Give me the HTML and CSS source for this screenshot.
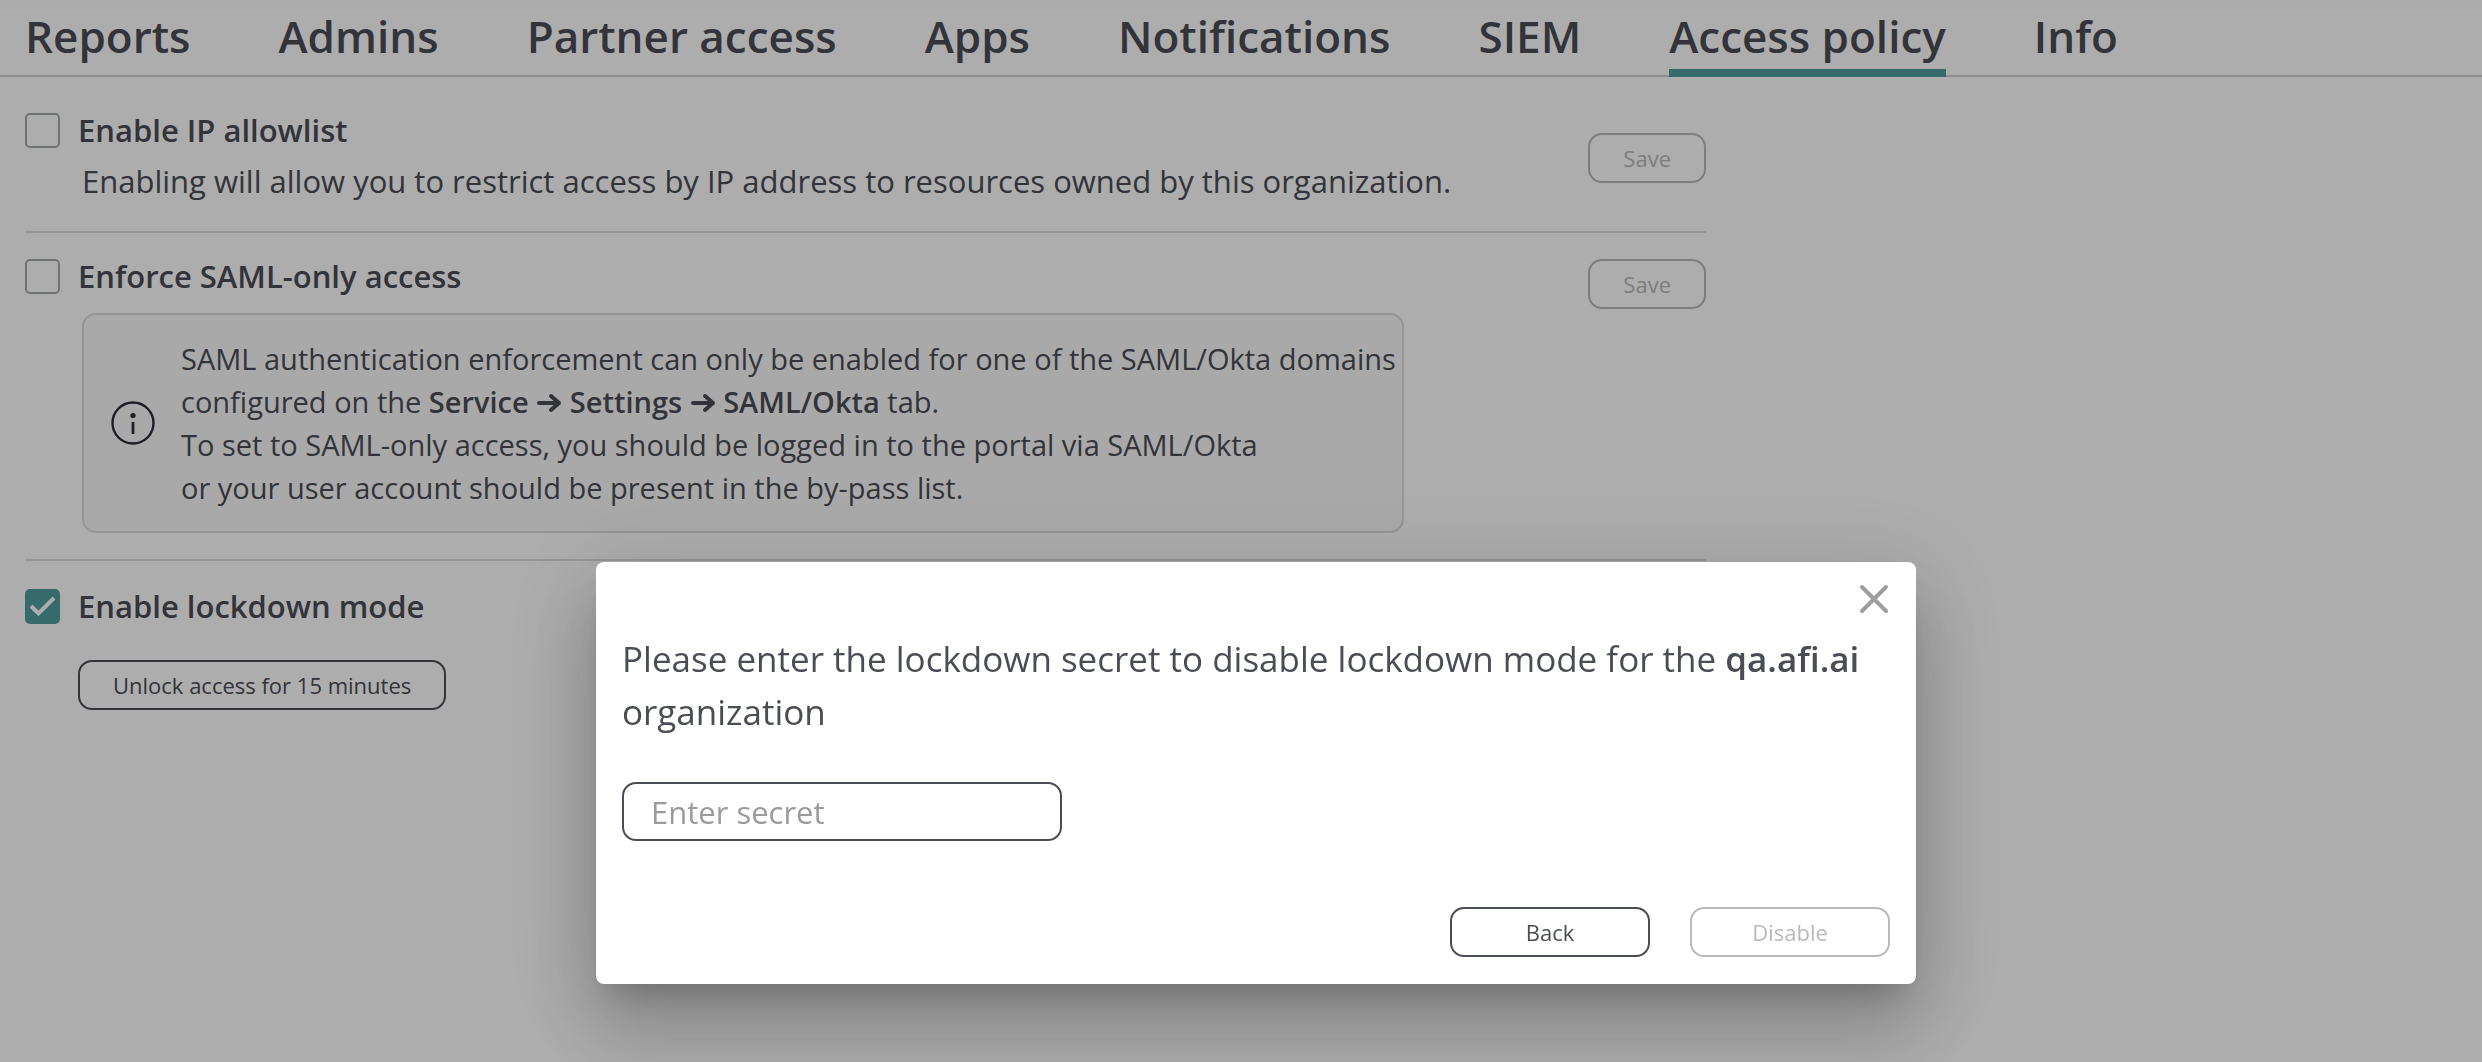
FILE: index.html
```html
<!DOCTYPE html>
<html lang="en">
<head>
  <meta charset="utf-8">
  <title>Access policy</title>
  <link rel="stylesheet" href="styles.css">
</head>
<body>
  <nav class="tabs">
    <a class="tab" href="#reports">Reports</a>
    <a class="tab" href="#admins">Admins</a>
    <a class="tab" href="#partner">Partner access</a>
    <a class="tab" href="#apps">Apps</a>
    <a class="tab" href="#notifications">Notifications</a>
    <a class="tab" href="#siem">SIEM</a>
    <a class="tab tab-active" href="#policy" aria-current="page">Access policy</a>
    <a class="tab" href="#info">Info</a>
  </nav>

  <main class="policies">
    <section class="policy policy-ip">
      <div class="policy-body">
        <label class="check"><input type="checkbox" class="check-box">Enable IP allowlist</label>
        <p class="description">Enabling will allow you to restrict access by IP address to resources owned by this organization.</p>
      </div>
      <button class="button button-save" type="button" disabled>Save</button>
    </section>

    <section class="policy policy-saml">
      <div class="policy-body">
        <label class="check"><input type="checkbox" class="check-box">Enforce SAML-only access</label>
        <div class="notice">
          <svg class="notice-icon" viewBox="0 0 44 44" aria-hidden="true">
            <circle cx="22" cy="22" r="20.5" fill="none" stroke="currentColor" stroke-width="2.4"/>
            <circle cx="22" cy="14.5" r="2.6" fill="currentColor"/>
            <path d="M22 21v12" stroke="currentColor" stroke-width="2.8"/>
          </svg>
          <p class="notice-text">SAML authentication enforcement can only be enabled for one of the SAML/Okta domains<br>configured on the <b>Service <svg class="arrow" viewBox="0 0 26 20" role="img" aria-label="to"><path d="M3 10h20M15 3l8 7-8 7"/></svg> Settings <svg class="arrow" viewBox="0 0 26 20" role="img" aria-label="to"><path d="M3 10h20M15 3l8 7-8 7"/></svg> SAML/Okta</b> tab.<br>To set to SAML-only access, you should be logged in to the portal via SAML/Okta<br>or your user account should be present in the by-pass list.</p>
        </div>
      </div>
      <button class="button button-save" type="button" disabled>Save</button>
    </section>

    <section class="policy policy-lockdown">
      <div class="policy-body">
        <label class="check"><input type="checkbox" class="check-box" checked>Enable lockdown mode</label>
        <button class="button button-unlock" type="button">Unlock access for 15 minutes</button>
      </div>
    </section>
  </main>

  <div class="overlay">
    <form class="dialog" role="dialog" aria-modal="true" aria-labelledby="dialog-message">
      <button class="close" type="button" aria-label="Close">
        <svg class="close-icon" viewBox="0 0 30 30" aria-hidden="true"><path d="M3 3l24 24M27 3L3 27"/></svg>
      </button>
      <label class="message" id="dialog-message" for="secret">Please enter the lockdown secret to disable lockdown mode for the <b>qa.afi.ai</b> organization</label>
      <input class="secret" id="secret" type="text" placeholder="Enter secret">
      <div class="actions">
        <button class="button button-action" type="button">Back</button>
        <button class="button button-action" type="submit" disabled>Disable</button>
      </div>
    </form>
  </div>
</body>
</html>
```
FILE: styles.css
```css
* {
  box-sizing: border-box;
}

body {
  margin: 0;
  background: #fff;
  color: #4b4d54;
  font-family: "Open Sans", "Noto Sans", sans-serif;
  font-size: 31px;
}

p {
  margin: 0;
}

b {
  font-weight: 600;
}

.tabs {
  display: flex;
  gap: 88px;
  height: 77px;
  padding: 0 25px;
  border-bottom: 2px solid #d2d2d2;
  box-shadow: inset 0 10px #fcfcfc;
}

.tab {
  height: 77px;
  border-bottom: 8px solid transparent;
  color: inherit;
  font-size: 44px;
  font-weight: 600;
  line-height: 72px;
  text-decoration: none;
  white-space: nowrap;
}

.tab-active {
  border-bottom-color: #509c9e;
}

.policies {
  max-width: 1706px;
  padding-left: 25px;
}

.policy {
  display: flex;
  align-items: flex-start;
  justify-content: space-between;
  border-bottom: 2px solid #dcdcdc;
}

.policy:last-child {
  border-bottom: 0;
}

.policy-ip {
  align-items: center;
  padding: 32px 0 28px;
}

.policy-saml {
  padding: 22px 0 26px;
}

.policy-lockdown {
  padding: 24px 0;
}

.check {
  display: flex;
  align-items: center;
  gap: 18px;
  font-weight: 600;
  line-height: 42px;
}

.check-box {
  appearance: none;
  width: 35px;
  height: 35px;
  margin: 0;
  border: 2px solid #a2aaa7;
  border-radius: 5px;
}

.check-box:checked {
  border-color: #509c9e;
  background: #509c9e url("data:image/svg+xml,%3Csvg xmlns='http://www.w3.org/2000/svg' viewBox='0 0 35 35'%3E%3Cpath d='M6 17l7.500 7.500L29 9' fill='none' stroke='white' stroke-width='4'/%3E%3C/svg%3E") center / 100% border-box;
}

.description {
  padding: 8px 0 0 57px;
  line-height: 44px;
}

.notice {
  display: flex;
  align-items: center;
  gap: 26px;
  margin: 16px 0 0 57px;
  padding: 22px 6px 22px 27px;
  border: 2px solid #dcdcdc;
  border-radius: 14px;
  background: #fafafa;
}

.notice-icon {
  flex: none;
  width: 44px;
  height: 44px;
  color: #2b2d38;
}

.notice-text {
  font-size: 29px;
  line-height: 43px;
}

.arrow {
  width: 26px;
  height: 20px;
  fill: none;
  stroke: currentColor;
  stroke-width: 4;
  stroke-linecap: round;
  stroke-linejoin: round;
}

.button {
  height: 50px;
  padding: 0 33px;
  border: 2px solid #4b4d54;
  border-radius: 14px;
  background: transparent;
  color: #4b4d54;
  font: 22px "Open Sans", "Noto Sans", sans-serif;
}

.button:disabled {
  border-color: #b9b9b9;
  color: #b9b9b9;
}

.button-save {
  margin-top: 4px;
}

.button-unlock {
  margin: 33px 0 0 53px;
}

.overlay {
  position: fixed;
  inset: 0;
  display: flex;
  align-items: flex-start;
  justify-content: center;
  padding: 562px 0 0 30px;
  background: rgba(0, 0, 0, 0.32);
}

.dialog {
  display: flex;
  flex-direction: column;
  width: 1320px;
  padding: 19px 26px 27px;
  border-radius: 8px;
  background: #fff;
  box-shadow:
    0 22px 30px -14px rgba(0, 0, 0, 0.2),
    0 48px 76px 6px rgba(0, 0, 0, 0.14),
    0 18px 92px 16px rgba(0, 0, 0, 0.12);
}

.close {
  display: flex;
  align-self: flex-end;
  padding: 3px 1px;
  border: 0;
  background: none;
}

.close-icon {
  width: 30px;
  height: 30px;
  fill: none;
  stroke: #9c9e9f;
  stroke-width: 4;
  stroke-linecap: round;
}

.message {
  margin-top: 15px;
  font-size: 35px;
  line-height: 53px;
}

.secret {
  width: 440px;
  height: 59px;
  margin-top: 44px;
  padding: 0 27px;
  border: 2px solid #4b4d54;
  border-radius: 14px;
  color: #4b4d54;
  font: 31px "Open Sans", "Noto Sans", sans-serif;
}

.secret::placeholder {
  color: #9b9b9b;
}

.actions {
  display: flex;
  justify-content: flex-end;
  gap: 40px;
  margin-top: 66px;
}

.button-action {
  width: 200px;
}
```
